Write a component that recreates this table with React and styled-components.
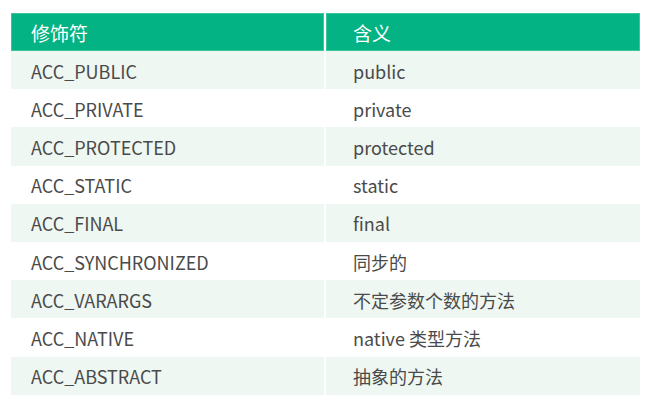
import React from "react";
import styled, { createGlobalStyle } from "styled-components";

const Global = createGlobalStyle`
  html, body { margin: 0; padding: 0; background: #ffffff; }
  body { font-family: "Noto Sans CJK SC", "Noto Sans", sans-serif; }
`;

const Page = styled.div`
  padding: 13px 16px 0 11px;
`;

const Table = styled.div`
  display: flex;
  flex-direction: column;
  width: 629px;
`;

const Row = styled.div`
  display: grid;
  grid-template-columns: 313px 314px;
  column-gap: 2px;
  height: ${(p) => (p.$head ? "38px" : "38.2px")};
`;

const Cell = styled.div`
  display: flex;
  align-items: center;
  box-sizing: border-box;
  padding-left: ${(p) => (p.$second ? "27px" : "20px")};
  padding-top: 1px;
  background: ${(p) => (p.$head ? "#03b383" : p.$shade ? "#eef7f1" : "#ffffff")};
  color: ${(p) => (p.$head ? "#ffffff" : "#4a4a4a")};
  font-size: ${(p) => (p.$head ? "19px" : "18px")};
  font-family: "Noto Sans CJK SC", "Noto Sans", sans-serif;
  white-space: nowrap;
  ${(p) => (p.$head ? "box-shadow: inset 0 0 0 1px #3cc49c;" : "")}
`;

const rows = [
  ["ACC_PUBLIC", "public"],
  ["ACC_PRIVATE", "private"],
  ["ACC_PROTECTED", "protected"],
  ["ACC_STATIC", "static"],
  ["ACC_FINAL", "final"],
  ["ACC_SYNCHRONIZED", "同步的"],
  ["ACC_VARARGS", "不定参数个数的方法"],
  ["ACC_NATIVE", "native 类型方法"],
  ["ACC_ABSTRACT", "抽象的方法"],
];

export default function App() {
  return (
    <>
      <Global />
      <Page>
        <Table>
          <Row $head>
            <Cell $head>修饰符</Cell>
            <Cell $head $second>含义</Cell>
          </Row>
          {rows.map(([a, b], i) => (
            <Row key={a}>
              <Cell $shade={i % 2 === 0}>{a}</Cell>
              <Cell $shade={i % 2 === 0} $second>{b}</Cell>
            </Row>
          ))}
        </Table>
      </Page>
    </>
  );
}
